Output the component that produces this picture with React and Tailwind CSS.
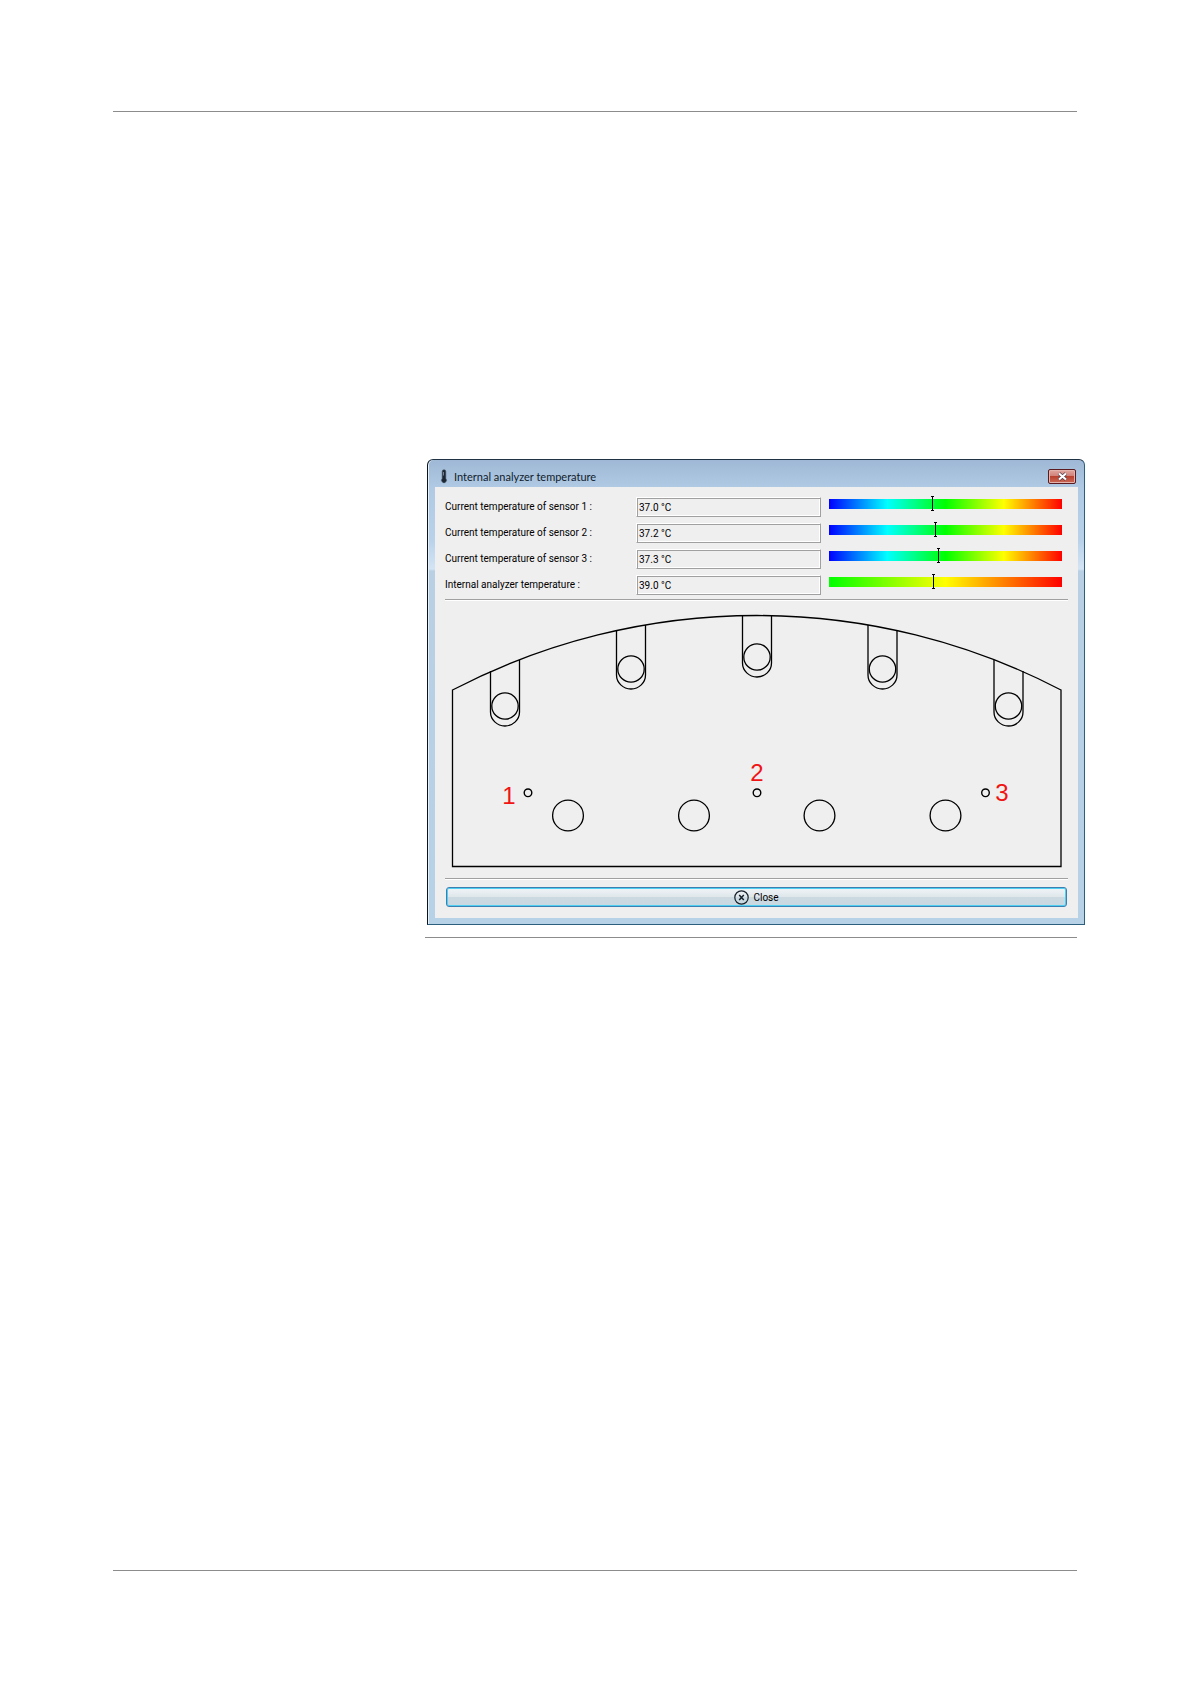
import React from 'react';

const COLD_TO_HOT = 'bg-[linear-gradient(to_right,#0000ff,#00ffff_25%,#00ff00_50%,#ffff00_75%,#ff0000)]';
const NORMAL_TO_HOT = 'bg-[linear-gradient(to_right,#00ff00,#ffff00_50%,#ff0000)]';

const readings = [
  { id: 'sensor-1', label: 'Current temperature of sensor 1 :', value: '37.0 °C', position: 44.3, scale: COLD_TO_HOT },
  { id: 'sensor-2', label: 'Current temperature of sensor 2 :', value: '37.2 °C', position: 45.6, scale: COLD_TO_HOT },
  { id: 'sensor-3', label: 'Current temperature of sensor 3 :', value: '37.3 °C', position: 46.9, scale: COLD_TO_HOT },
  { id: 'internal', label: 'Internal analyzer temperature :', value: '39.0 °C', position: 44.7, scale: NORMAL_TO_HOT },
];

// left/right are the heights where the slot walls meet the curved edge
const slots = [
  { x: 60, y: 105, left: 70, right: 59 },
  { x: 186, y: 68, left: 29, right: 24 },
  { x: 312, y: 56, left: 15, right: 15 },
  { x: 437.5, y: 68, left: 24, right: 29 },
  { x: 563.5, y: 105, left: 59, right: 70 },
];

const holes = [123, 249, 374.5, 500.5];

const sensors = [
  { name: '1', x: 83, textX: 64, textY: 203 },
  { name: '2', x: 312, textX: 312, textY: 180 },
  { name: '3', x: 540.5, textX: 557, textY: 200 },
];

function ThermometerIcon() {
  return (
    <svg className="h-4 w-2" viewBox="0 0 8 16" aria-hidden="true">
      <path d="M2.2 2.5a1.8 1.8 0 0 1 3.6 0v7a2.5 2.5 0 1 1-3.6 0z" fill="#1c2733" stroke="#44515f" strokeWidth="0.6" />
      <path d="M3.5 3v3.5" stroke="#8d9aa8" strokeWidth="0.8" />
    </svg>
  );
}

function Reading({ id, label, value, position, scale }) {
  return (
    <div className="grid grid-cols-[191px_185px_1fr] items-start">
      <label htmlFor={id} className="leading-5">{label}</label>
      <input
        id={id}
        readOnly
        defaultValue={value}
        className="h-5 w-full border border-t-white border-l-white border-r-[#a0a0a0] border-b-[#a0a0a0] bg-[#efefef] pl-[2px] leading-4 shadow-[inset_1px_1px_#a0a0a0,inset_-1px_-1px_#ffffff] outline-none"
      />
      <div className={`relative mt-[2px] mr-[6px] ml-2 h-[10px] ${scale}`}>
        <div
          className="absolute -top-[3px] flex h-[15px] w-[3px] -translate-x-px flex-col items-center"
          style={{ left: `${position}%` }}
        >
          <span className="h-px w-full bg-black" />
          <span className="w-px flex-1 bg-black" />
          <span className="h-px w-full bg-black" />
        </div>
      </div>
    </div>
  );
}

function RotorDiagram() {
  return (
    <svg className="block h-auto w-full" viewBox="0 0 623 277" fill="none" stroke="#000" strokeWidth="1.3">
      <path d="M7.5 265.5V89A658.5 658.5 0 0 1 616 89V265.5Z" />
      {slots.map((s) => (
        <g key={s.x}>
          <path d={`M${s.x - 14.5} ${s.left}V${s.y + 6}a14.5 14 0 0 0 29 0V${s.right}`} />
          <circle cx={s.x} cy={s.y} r="13.2" />
        </g>
      ))}
      {holes.map((x) => (
        <circle key={x} cx={x} cy="214.5" r="15.4" />
      ))}
      {sensors.map((s) => (
        <g key={s.name}>
          <circle cx={s.x} cy="191.8" r="3.8" strokeWidth="1.4" />
          <text
            x={s.textX}
            y={s.textY}
            textAnchor="middle"
            fill="#f01414"
            stroke="none"
            className="font-['Liberation_Sans',sans-serif] text-[24px]"
          >
            {s.name}
          </text>
        </g>
      ))}
    </svg>
  );
}

function Divider() {
  return <div className="h-[2px] border-t border-[#a0a0a0] bg-white" />;
}

function TemperatureWindow() {
  return (
    <section className="rounded-t-md border border-t-[#1f3345] border-r-[#2b5f7d] border-b-[#2b5f7d] border-l-[#0c151d] bg-[linear-gradient(to_bottom,#9fb8d5,#b0cae4_28px,#b9d2ea_80px,#d3e4f4_109px,#b9d0e4_111px,#b7d1e6)] pr-[6px] pb-[6px] pl-[7px] shadow-[inset_1px_0_#e8f1f8]">
      <header className="flex h-[27px] items-center pt-[6px] pl-[5px]">
        <ThermometerIcon />
        <h1 className="ml-[6px] flex-1 font-[Lato,sans-serif] text-[11px] leading-4 text-[#101c2c]">
          Internal analyzer temperature
        </h1>
        <button
          type="button"
          aria-label="Close window"
          className="mr-[2px] flex h-[15px] w-7 items-center justify-center rounded-[2px] border border-[#5a1a20] bg-[linear-gradient(to_bottom,#e0a79f,#d08078_48%,#b8412f_50%,#cc6a58)] shadow-[inset_0_0_0_1px_#e3b3ad]"
        >
          <svg className="h-[9px] w-[11px]" viewBox="0 0 11 9" aria-hidden="true">
            <path d="M2 1.5L9 7.5M9 1.5L2 7.5" stroke="#4c3a48" strokeWidth="3.6" />
            <path d="M2 1.5L9 7.5M9 1.5L2 7.5" stroke="#fff" strokeWidth="2.2" />
          </svg>
        </button>
      </header>

      <div className="bg-[#efefef] px-[10px] pt-[10px] pb-[11px] font-[Roboto,sans-serif] text-[10px] text-black">
        <div className="mb-1 flex flex-col gap-[6px]">
          {readings.map((r) => (
            <Reading key={r.id} {...r} />
          ))}
        </div>
        <Divider />
        <RotorDiagram />
        <Divider />
        <div className="px-px pt-[7px]">
          <button
            type="button"
            className="flex h-5 w-full items-center justify-center gap-1 rounded-[3px] border border-[#3c7fb1] bg-[linear-gradient(to_bottom,#f0f4f6,#dfe7eb_50%,#ccd9e0_52%,#c8d8e2)] shadow-[inset_0_0_0_1px_#4fd0f2]"
          >
            <svg className="h-[15px] w-[15px]" viewBox="0 0 15 15" fill="none" stroke="#14202a" aria-hidden="true">
              <circle cx="7.5" cy="7.5" r="6.7" strokeWidth="1.2" />
              <path d="M5.2 5L9.8 10M9.8 5L5.2 10" strokeWidth="1.5" />
            </svg>
            Close
          </button>
        </div>
      </div>
    </section>
  );
}

export default function App() {
  return (
    <div className="flex min-h-screen flex-col bg-white px-[113px] pt-[111px] pb-[113px]">
      <hr className="border-[#8c8c8c]" />
      <main className="mt-[347px] mb-16 pl-[312px]">
        <div className="-mr-2 pl-[2px]">
          <TemperatureWindow />
        </div>
        <hr className="mt-3 border-[#8c8c8c]" />
      </main>
      <hr className="mt-auto border-[#8c8c8c]" />
    </div>
  );
}
